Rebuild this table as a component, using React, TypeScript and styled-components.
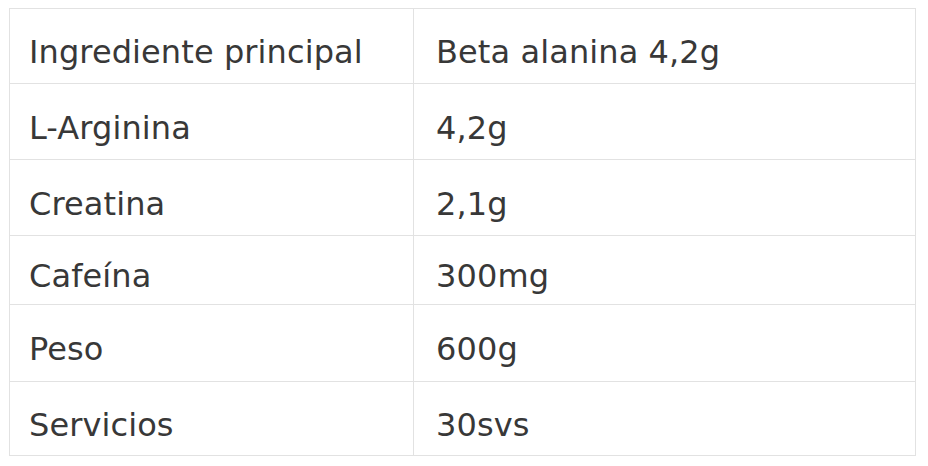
import React from "react";
import styled, { createGlobalStyle } from "styled-components";

const GlobalStyle = createGlobalStyle`
  html, body {
    margin: 0;
    padding: 0;
    background: #ffffff;
  }
  body {
    font-family: "DejaVu Sans", Verdana, sans-serif;
  }
`;

const Page = styled.div`
  padding: 8px 0 0 9px;
`;

const Table = styled.div`
  display: grid;
  grid-template-columns: 403px 501px;
  gap: 1px;
  padding: 1px;
  width: max-content;
  background: #e2e2e2;
`;

const Cell = styled.div<{ $h: number; $pad: number }>`
  background: #ffffff;
  height: ${(p) => p.$h}px;
  box-sizing: border-box;
  display: flex;
  align-items: center;
  padding: 12px 0 0 ${(p) => p.$pad}px;
  font-size: 32px;
  letter-spacing: 0.1px;
  color: #383838;
  white-space: nowrap;
`;

const rows: { label: string; value: string; h: number }[] = [
  { label: "Ingrediente principal", value: "Beta alanina 4,2g", h: 74 },
  { label: "L-Arginina", value: "4,2g", h: 75 },
  { label: "Creatina", value: "2,1g", h: 75 },
  { label: "Cafeína", value: "300mg", h: 68 },
  { label: "Peso", value: "600g", h: 76 },
  { label: "Servicios", value: "30svs", h: 73 },
];

export default function App() {
  return (
    <>
      <GlobalStyle />
      <Page>
        <Table>
          {rows.map((r) => (
            <React.Fragment key={r.label}>
              <Cell $h={r.h} $pad={19}>{r.label}</Cell>
              <Cell $h={r.h} $pad={22}>{r.value}</Cell>
            </React.Fragment>
          ))}
        </Table>
      </Page>
    </>
  );
}
